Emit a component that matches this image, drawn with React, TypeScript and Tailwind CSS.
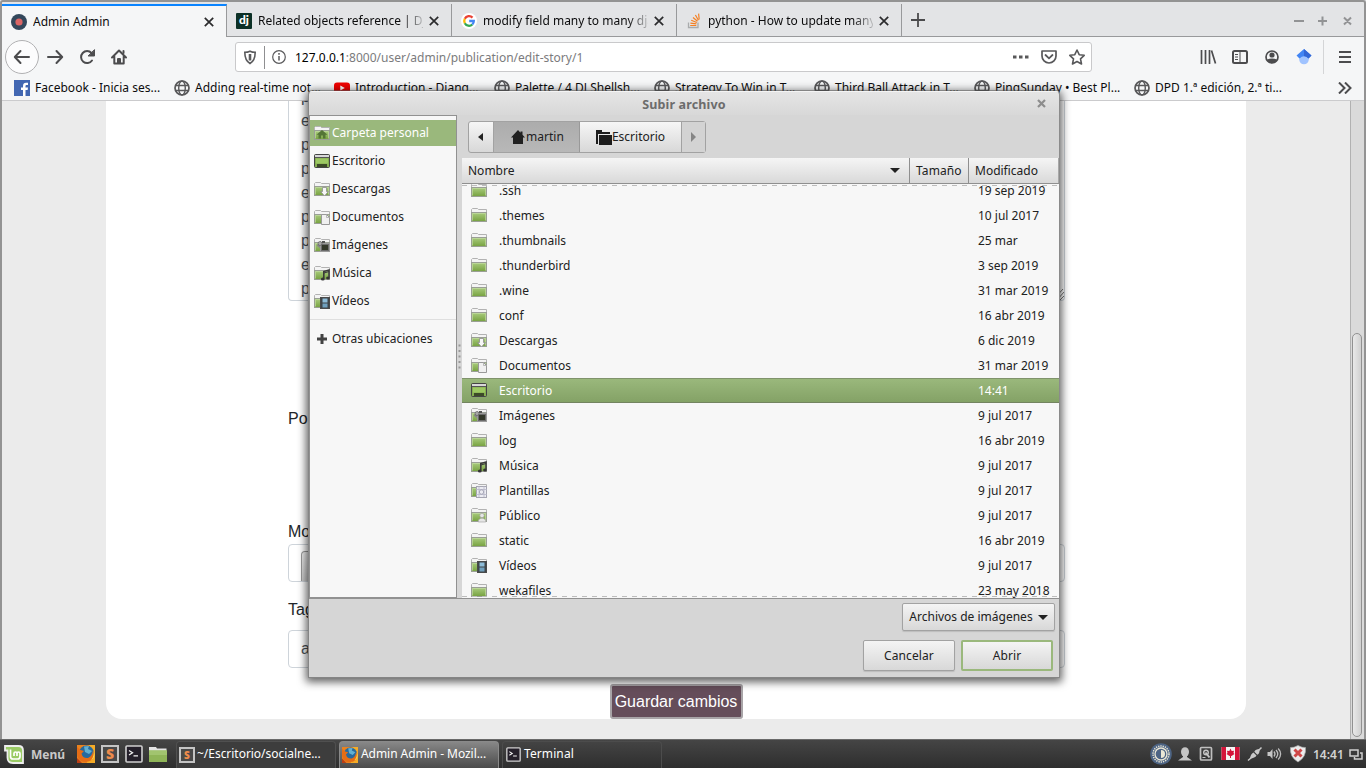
import React from 'react';

const NOTO = "font-['Noto_Sans',sans-serif]";

type FolderKind =
  | 'plain' | 'home' | 'desktop' | 'download' | 'docs' | 'images'
  | 'music' | 'video' | 'templates' | 'public';

function FolderIcon({ kind = 'plain' }: { kind?: FolderKind }) {
  if (kind === 'desktop') {
    return (
      <svg width="16" height="16" viewBox="0 0 16 16" className="-mt-px shrink-0">
        <rect x="0.5" y="1.5" width="15" height="13" rx="1" fill="#85ad50" stroke="#454545" />
        <rect x="1" y="2" width="14" height="2" fill="#d8d8d8" />
        <path d="M1 4.5H15" stroke="#555" />
        <rect x="2" y="5.5" width="12" height="5" fill="#9dc963" />
        <rect x="3" y="11" width="10" height="3" fill="#3c4a28" />
      </svg>
    );
  }
  return (
    <svg width="16" height="16" viewBox="0 0 16 16" className="-mt-px shrink-0">
      <defs>
        <linearGradient id="folderGreen" x1="0" y1="0" x2="0" y2="1">
          <stop offset="0" stopColor="#abcd80" />
          <stop offset="1" stopColor="#76a13f" />
        </linearGradient>
      </defs>
      <path d="M0.5 13.5V2.5L1.5 1.5H6.5L7.5 2.5H15.5V13.5Z" fill="#f4f4f4" stroke="#b2b2b2" />
      <rect x="0.5" y="5.5" width="15" height="9" fill="url(#folderGreen)" stroke="#9a9f95" />
      <path d="M1.5 13.5V6.5H14.5V13.5" stroke="#c3dca2" fill="none" strokeOpacity=".7" />
      {kind === 'home' && (
        <path d="M8 5L2.5 9.8H4.5V13.5H7V10.5H9V13.5H11.5V9.8H13.5Z" fill="#547536" />
      )}
      {kind === 'download' && (
        <path d="M8.5 6.5H12.5V10.5H14.3L10.5 15L6.700 10.500H8.500Z" fill="#f7f7f7" stroke="#8d8d8d" strokeWidth=".8" />
      )}
      {kind === 'docs' && (
        <>
          <path d="M7.5 5.5H12.5L15.5 8.5V15.5H7.5Z" fill="#f0f0f0" stroke="#999" />
          <path d="M12.5 5.5V8.5H15.5" fill="none" stroke="#aaa" strokeWidth=".8" />
        </>
      )}
      {kind === 'images' && (
        <>
          <path d="M2.5 8.5L7 4V12Z" fill="#888" />
          <rect x="6.5" y="6.5" width="9" height="8" fill="#6b6b6b" stroke="#9a9a9a" />
          <rect x="8" y="8" width="6" height="5" fill="#33382a" />
          <circle cx="6" cy="6.5" r="2" fill="#a8a8a8" stroke="#555" strokeWidth=".6" />
          <rect x="8" y="4" width="3" height="2" fill="#555" />
        </>
      )}
      {kind === 'music' && (
        <>
          <path d="M9.8 13.5V6.500L15 5V12.500" fill="none" stroke="#3a3a3a" strokeWidth="1.600" />
          <path d="M9.800 8L15 6.500" stroke="#3a3a3a" strokeWidth="1.300" />
          <ellipse cx="8.8" cy="14" rx="1.900" ry="1.600" fill="#333" />
          <ellipse cx="14" cy="13" rx="1.900" ry="1.600" fill="#333" />
        </>
      )}
      {kind === 'video' && (
        <>
          <rect x="6.5" y="4.5" width="9" height="11" fill="#3f4549" stroke="#4a4a4a" />
          <rect x="8.5" y="5.5" width="5" height="4" fill="#8dbcd8" />
          <rect x="8.5" y="10.5" width="5" height="4" fill="#6f9fbd" />
        </>
      )}
      {kind === 'templates' && (
        <>
          <rect x="5.5" y="4.5" width="10" height="11" fill="#ececf2" stroke="#a6a6b2" />
          <path d="M8 4V15M13 4V15M5 7.5H16M5 12.5H16" stroke="#b6b6c8" strokeWidth=".8" />
          <circle cx="10.5" cy="10" r="2.2" fill="none" stroke="#9c9cad" strokeWidth=".8" />
        </>
      )}
      {kind === 'public' && (
        <>
          <circle cx="11" cy="8.5" r="2.2" fill="#e6e6e6" stroke="#9c9c9c" strokeWidth=".6" />
          <path d="M7.3 15V13L9.8 11.200H12.200L14.800 13V15Z" fill="#e6e6e6" stroke="#9c9c9c" strokeWidth=".6" />
        </>
      )}
    </svg>
  );
}

function Globe() {
  return (
    <svg width="16" height="16" viewBox="0 0 16 16" className="shrink-0" fill="none" stroke="#58585a" strokeWidth="1.4">
      <circle cx="8" cy="8" r="7" strokeWidth="1.7" />
      <ellipse cx="8" cy="8" rx="3.3" ry="7" />
      <path d="M1.5 5.5H14.5M1.5 10.5H14.5" />
    </svg>
  );
}

function CloseX() {
  return (
    <svg width="10" height="10" viewBox="0 0 10 10" className="shrink-0">
      <path d="M0.8 0.8L9.2 9.2M9.2 0.8L0.8 9.2" stroke="#2b2b2d" strokeWidth="1.7" />
    </svg>
  );
}

function Favicon({ kind }: { kind: string }) {
  if (kind === 'admin')
    return (
      <svg width="16" height="16" viewBox="0 0 16 16">
        <circle cx="8" cy="8" r="8" fill="#33475b" />
        <circle cx="8" cy="8" r="3.6" fill="#da6565" />
      </svg>
    );
  if (kind === 'dj')
    return (
      <span className="flex h-4 w-4 items-center justify-center rounded-[1px] bg-[#0c3026] pb-[2px] font-['Lato',sans-serif] text-[12px] leading-none font-black text-white">dj</span>
    );
  if (kind === 'google')
    return (
      <svg width="16" height="16" viewBox="0 0 16 16" fill="none" strokeWidth="2.3">
        <circle cx="8" cy="8" r="8" fill="#fff" />
        <path d="M11.5 4.6A4.8 4.8 0 0 0 3.8 5.8" stroke="#ea4335" />
        <path d="M3.8 5.8A4.8 4.8 0 0 0 3.8 10.2" stroke="#fbbc05" />
        <path d="M3.8 10.2A4.8 4.8 0 0 0 11.3 11.5" stroke="#34a853" />
        <path d="M11.3 11.5A4.8 4.8 0 0 0 12.8 8H8.2" stroke="#4285f4" />
      </svg>
    );
  return (
    <svg width="16" height="16" viewBox="0 0 16 16" fill="none">
      <path d="M2.5 9.5V14.5H12V9.5" stroke="#a9abad" strokeWidth="1.3" />
      <path d="M4.2 12.5H10.3M4.4 10.1L10.4 10.9M5.2 7.3L10.8 9.5M7 4.5L11.5 8.2M9.4 2L12.4 7.3M12.6 0.6L13.2 6.5" stroke="#f48024" strokeWidth="1.2" />
    </svg>
  );
}

const tabs = [
  { kind: 'admin', title: 'Admin Admin' },
  { kind: 'dj', title: 'Related objects reference | Django' },
  { kind: 'google', title: 'modify field many to many django' },
  { kind: 'so', title: 'python - How to update many to' },
];

function TabBar() {
  return (
    <div className="flex h-[37px] border-b border-[#98999b] bg-[#e3e4e6] pl-[2px]">
      {tabs.map((t, i) => (
        <div
          key={t.kind}
          className={
            i === 0
              ? 'mt-1 flex h-[33px] w-[225px] shrink-0 items-center border-t-2 border-r border-t-[#0a84ff] border-r-[#98999b] bg-[#f5f6f7] pr-3 pl-[9px]'
              : 'mt-1 flex h-8 w-[225px] shrink-0 items-center border-r border-[#98999b] pt-[2px] pr-3 pl-[9px]'
          }
        >
          <Favicon kind={t.kind} />
          <div className={`ml-[6px] w-[165px] overflow-hidden text-[12px] whitespace-nowrap text-[#0c0c0d] ${i ? '[mask-image:linear-gradient(to_right,black_145px,transparent_169px)]' : ''}`}>
            {t.title}
          </div>
          <div className="ml-auto"><CloseX /></div>
        </div>
      ))}
      <svg width="14" height="14" viewBox="0 0 14 14" className="mt-[13px] ml-[9px]">
        <path d="M7 0V14M0 7H14" stroke="#4a4a4c" strokeWidth="1.8" />
      </svg>
      <svg width="64" height="12" viewBox="0 0 64 12" className="mt-[15px] mr-[10px] ml-auto" stroke="#929395" strokeWidth="2">
        <path d="M2 6H12M26 6H35M30.5 1.5V10.5M52 2.5L59 9.5M59 2.5L52 9.5" />
      </svg>
    </div>
  );
}

function NavBar() {
  return (
    <div className="flex h-10 items-center bg-[#f5f6f7] pl-1">
      <svg width="130" height="36" viewBox="4 39 130 36" fill="none" stroke="#4c4c4e" strokeWidth="2" strokeLinejoin="round" strokeLinecap="round">
        <circle cx="22" cy="57" r="16.5" fill="#fcfcfd" stroke="#b1b1b3" strokeWidth="1" />
        <path d="M15 57H29M20.5 51L14.8 57L20.5 63" />
        <path d="M48 57H62M56.5 51L62.2 57L56.5 63" />
        <path d="M92 60.5A6 6 0 1 1 91.5 53" />
        <path d="M94.5 50V56H88.5Z" fill="#4c4c4e" strokeWidth="1" />
        <path d="M112 57.5L119 50.5L126 57.5M114.3 56.5V63.5H123.7V56.5" />
        <path d="M118 63V59H120V63M123.5 51V53" />
      </svg>
      <div className="ml-[101px] flex h-[30px] w-[857px] items-center rounded-[3px] border border-[#c9c9cb] bg-white">
        <svg width="50" height="26" viewBox="239 44 50 26" className="ml-[3px]" fill="none" stroke="#5a5a5c">
          <path d="M250 51.2C248.500 51.900 246.500 52.300 244.800 52.300C244.800 57 245.500 61 250 63.500C254.500 61 255.200 57 255.200 52.300C253.500 52.300 251.500 51.900 250 51.2Z" strokeWidth="1.6" />
          <path d="M250 54V60.500" strokeWidth="2.600" />
          <path d="M264.500 46V69" stroke="#8f8f91" strokeWidth="1" />
          <circle cx="279" cy="57" r="6.300" strokeWidth="1.200" />
          <path d="M279 56V60.500M279 53V54.700" strokeWidth="1.500" />
        </svg>
        <div className="ml-[6px] pt-px text-[12px] whitespace-nowrap text-[#7b7b7d]">
          <span className="text-black">127.0.0.1</span>:8000/user/admin/publication/edit-story/1
        </div>
        <svg width="74" height="18" viewBox="1012 48 74 18" className="mr-[5px] ml-auto" fill="none" stroke="#58585a">
          <path d="M1013 57H1016.500M1019 57H1022.500M1025 57H1028.500" strokeWidth="3.200" />
          <path d="M1042 51H1056V56A7 7 0 0 1 1042 56Z" strokeWidth="1.700" strokeLinejoin="round" />
          <path d="M1045.500 55L1049 58.300L1052.500 55" strokeWidth="1.800" strokeLinecap="round" />
          <path d="M1077 50L1079.200 54.700L1084.200 55.300L1080.500 58.800L1081.500 64L1077 61.500L1072.500 64L1073.500 58.800L1069.800 55.300L1074.800 54.700Z" strokeWidth="1.600" strokeLinejoin="round" />
        </svg>
      </div>
      <svg width="160" height="34" viewBox="1196 40 160 34" className="ml-[104px]" fill="none" stroke="#4c4c4e">
        <path d="M1201.500 50V64M1205.500 50V64M1209.500 50V64M1211.500 50.500L1215.500 63.500" strokeWidth="1.700" />
        <rect x="1233" y="51" width="14" height="12" rx="1.500" strokeWidth="2" />
        <path d="M1240 51V63M1235 54.500H1238M1235 57H1238M1235 59.500H1238" strokeWidth="1" />
        <circle cx="1272" cy="57" r="6" strokeWidth="1.700" />
        <circle cx="1272" cy="55" r="2.600" fill="#4c4c4e" stroke="none" />
        <path d="M1267 59.500Q1272 57.500 1277 59.500L1275 63H1269Z" fill="#4c4c4e" stroke="none" />
        <circle cx="1304" cy="59.500" r="4.800" fill="#a0c3ff" stroke="none" />
        <path d="M1304 49L1296.500 55.500L1299.500 58.500Q1304 54 1308.500 58.500L1311.500 55.500Z" fill="#4285f4" stroke="none" />
        <path d="M1304 49L1311.500 55.500L1308.500 58.500Q1306.500 56 1304 56Z" fill="#3367d6" stroke="none" />
        <path d="M1323.500 40V74" stroke="#d4d5d7" strokeWidth="1" />
        <path d="M1339 52H1351M1339 57H1351M1339 62H1351" strokeWidth="1.900" />
      </svg>
    </div>
  );
}

const bookmarks = [
  'Facebook - Inicia ses...', 'Adding real-time not...', 'Introduction - Djang...', 'Palette / 4 DJ Shellsh...',
  'Strategy To Win in T...', 'Third Ball Attack in T...', 'PingSunday • Best Pl...', 'DPD 1.ª edición, 2.ª ti...',
];

function Bookmarks() {
  return (
    <div className="flex h-6 items-center border-b border-[#cbcbcd] bg-[#f5f6f7] pb-[2px] pl-[14px]">
      {bookmarks.map((b, i) => (
        <div key={b} className="flex w-40 shrink-0 items-center gap-[5px] text-[12px] whitespace-nowrap text-[#0c0c0d]">
          {i === 0 ? (
            <svg width="16" height="16" viewBox="0 0 16 16">
              <rect width="16" height="16" fill="#4267b2" />
              <path d="M9 16V10H7V7.500H9V6C9 3.800 10.200 2.800 12 2.800H14V5H12.800C11.800 5 11.500 5.500 11.500 6.200V7.500H14L13.600 10H11.500V16Z" fill="#fff" />
            </svg>
          ) : i === 2 ? (
            <svg width="16" height="16" viewBox="0 0 16 16">
              <rect y="2.500" width="16" height="11" rx="3" fill="#f00000" />
              <path d="M6.300 5.500L10.800 8L6.300 10.500Z" fill="#fff" />
            </svg>
          ) : (
            <Globe />
          )}
          {b}
        </div>
      ))}
      <svg width="14" height="12" viewBox="0 0 14 12" className="ml-auto mr-[14px]" fill="none" stroke="#4c4c4e" strokeWidth="2">
        <path d="M1 0.500L6.500 6L1 11.500M7 0.500L12.500 6L7 11.500" />
      </svg>
    </div>
  );
}

function PageContent() {
  return (
    <div className="flex h-[638px] border-l-2 border-[#a3a3a3] bg-[#ebebeb]">
      <div className="ml-[104px] flex h-[618px] w-[1140px] flex-col items-start rounded-b-2xl bg-white pl-[182px] font-['Liberation_Sans',sans-serif] text-base leading-6 text-[#212529]">
        <div className="relative h-[202px] w-[777px] overflow-hidden rounded-b border border-t-0 border-[#ced4da] pl-3 text-[#495057]">
          <div className="-mt-4">
            {['p', 'e', 'p', 'p', 'e', 'p', 'p', 'e', 'p'].map((c, i) => (
              <div key={i}>{c}</div>
            ))}
          </div>
          <svg width="10" height="12" viewBox="0 0 10 12" className="absolute right-0 bottom-0">
            <path d="M0 11L9 1M3 12L10 4M6 12L10 8" stroke="#777" />
          </svg>
        </div>
        <div className="mt-[106px]">Po</div>
        <div className="mt-[89px]">Mo</div>
        <div className="h-[38px] w-[777px] rounded border border-[#ced4da] pt-[6px] pl-3">
          <div className="h-[30px] w-24 rounded-tl border border-b-0 border-[#999] bg-gradient-to-b from-[#f0f0f0] to-[#ccc]" />
        </div>
        <div className="mt-4">Tag</div>
        <div className="mt-2 h-[38px] w-[777px] rounded border border-[#ced4da] py-[6px] pl-3 text-[#495057]">a</div>
        <div className="mt-[16px] ml-[322px] flex h-[35px] w-[133px] items-center justify-center rounded-[3px] border-2 border-[#a8a4a7] bg-[#654d5a] pr-px text-white">
          Guardar cambios
        </div>
      </div>
      <div className="mr-[2px] ml-auto flex w-[14px] items-end border-l border-[#b1b1b1] bg-[#dadada]">
        <div className="mb-[2px] ml-[1px] h-[404px] w-[10px] rounded-full border border-[#919191] bg-gradient-to-r from-[#e9e9e9] to-[#d0d0d0]" />
      </div>
    </div>
  );
}

const places: [string, FolderKind][] = [
  ['Carpeta personal', 'home'], ['Escritorio', 'desktop'], ['Descargas', 'download'], ['Documentos', 'docs'],
  ['Imágenes', 'images'], ['Música', 'music'], ['Vídeos', 'video'],
];

const files: [string, string, FolderKind][] = [
  ['.ssh', '19 sep 2019', 'plain'], ['.themes', '10 jul 2017', 'plain'], ['.thumbnails', '25 mar', 'plain'],
  ['.thunderbird', '3 sep 2019', 'plain'], ['.wine', '31 mar 2019', 'plain'], ['conf', '16 abr 2019', 'plain'],
  ['Descargas', '6 dic 2019', 'download'], ['Documentos', '31 mar 2019', 'docs'], ['Escritorio', '14:41', 'desktop'],
  ['Imágenes', '9 jul 2017', 'images'], ['log', '16 abr 2019', 'plain'], ['Música', '9 jul 2017', 'music'],
  ['Plantillas', '9 jul 2017', 'templates'], ['Público', '9 jul 2017', 'public'], ['static', '16 abr 2019', 'plain'],
  ['Vídeos', '9 jul 2017', 'video'], ['wekafiles', '23 may 2018', 'plain'],
];

const GTK_BTN = 'flex items-center justify-center rounded-[2px] border border-[#a2a2a2] bg-gradient-to-b from-[#f4f4f4] to-[#d8d8d8] shadow-[0_1px_1px_rgba(0,0,0,0.12)]';

function FileDialog() {
  return (
    <div className="absolute top-[91px] left-[308px] flex h-[587px] w-[752px] flex-col rounded-t border border-t-[#f4f4f4] border-r-[#8b8b8b] border-b-[#858585] border-l-[#858585] bg-[#d6d6d6] text-[12px] text-[#212121] shadow-[0_-1px_0_0_rgba(90,90,90,0.5),0_2px_9px_2px_rgba(0,0,0,0.62)]">
      <div className="relative flex h-[23px] shrink-0 items-center justify-center rounded-t bg-gradient-to-b from-[#e5e5e5] to-[#d8d8d8] pt-[3px] text-[12.500px] font-bold text-[#6c6c6c]">
        <span className="tracking-[0.15px]">Subir archivo</span>
        <svg width="9" height="9" viewBox="0 0 9 9" className="absolute top-[7px] right-[13px]">
          <path d="M1 1L8 8M8 1L1 8" stroke="#8d8d8d" strokeWidth="2.200" />
        </svg>
      </div>
      <div className="flex h-[484px] shrink-0 border-b border-[#919191]">
        <div className="flex w-[148px] shrink-0 flex-col border border-[#919191] bg-[#f7f7f7] pt-1">
          {places.map(([name, kind], i) => (
            <div
              key={name}
              className={
                i === 0
                  ? 'mb-[2px] flex h-[26px] items-center gap-[2px] bg-[#9ab87c] pl-1 text-white'
                  : 'mb-[2px] flex h-[26px] items-center gap-[2px] pl-1'
              }
            >
              <FolderIcon kind={kind} />
              {name}
            </div>
          ))}
          <div className="mt-[3px] h-px bg-[#dfdfdf]" />
          <div className="mt-[6px] flex h-[26px] items-center gap-[5px] pl-[7px]">
            <svg width="10" height="10" viewBox="0 0 10 10">
              <path d="M3.500 0H6.500V3.500H10V6.500H6.500V10H3.500V6.500H0V3.500H3.500Z" fill="#424242" />
            </svg>
            Otras ubicaciones
          </div>
        </div>
        <div className="flex w-[5px] shrink-0 items-center justify-center">
          <svg width="3" height="25" viewBox="0 0 3 25">
            <path d="M1.500 0.500V25" stroke="#999" strokeWidth="2" strokeDasharray="2 3.500" />
          </svg>
        </div>
        <div className="flex min-w-0 flex-1 flex-col">
          <div className="flex h-[43px] shrink-0 items-start pt-[6px] pl-[6px]">
            <div className="flex h-8 rounded-[3px] border border-[#a2a2a2] bg-gradient-to-b from-[#f6f6f6] to-[#d8d8d8]">
              <div className="flex w-[25px] items-center justify-center border-r border-[#a2a2a2] pr-[2px]">
                <svg width="5" height="8" viewBox="0 0 5 8"><path d="M5 0V8L0 4Z" fill="#222" /></svg>
              </div>
              <div className="flex w-[86px] items-center justify-center border-r border-[#999] bg-gradient-to-b from-[#acacac] to-[#b8b8b8]">
                <svg width="14" height="14" viewBox="0 0 14 14" className="ml-[2px]"><path d="M7 0L0 7.500H2V14H12V7.500H14L11.500 4.800V1.500H9.500V2.700Z" fill="#212121" /></svg>
                <span className="ml-px">martin</span>
              </div>
              <div className="flex w-[102px] items-center justify-center border-r border-[#a2a2a2]">
                <svg width="16" height="15" viewBox="0 0 16 15"><path d="M0 0H6V2H14V4H2V14H0ZM3 5H16V15H3Z" fill="#1d1d1d" /></svg>
                Escritorio
              </div>
              <div className="flex w-[23px] items-center justify-center bg-[#d3d3d3]">
                <svg width="5" height="10" viewBox="0 0 5 10"><path d="M0 0V10L5 5Z" fill="#858585" /></svg>
              </div>
            </div>
          </div>
          <div className="flex h-[26px] shrink-0 items-center border-b border-[#8f8f8f] bg-gradient-to-b from-[#f5f5f5] to-[#d9d9d9]">
            <div className="flex h-full w-[448px] items-center justify-between border-r border-[#8f8f8f] pr-[9px] pl-[6px]">
              Nombre
              <svg width="10" height="5" viewBox="0 0 10 5"><path d="M0 0H10L5 5Z" fill="#212121" /></svg>
            </div>
            <div className="flex h-full w-[59px] items-center border-r border-[#8f8f8f] pl-[6px] tracking-[0.1px]">Tamaño</div>
            <div className="flex h-full w-[90px] items-center border-r border-[#a8a8a8] pl-[6px]">Modificado</div>
          </div>
          <div className="relative flex min-h-0 flex-1 flex-col justify-end overflow-hidden bg-[#f7f7f7]">
            <div className="-mb-[5px]">
              {files.map(([name, date, kind]) => (
                <div
                  key={name}
                  className={
                    name === 'Escritorio'
                      ? 'flex h-[25px] items-center border-y border-t-[#80936c] border-b-[#738460] bg-gradient-to-b from-[#9ab87c] to-[#84a266] pl-[9px] text-white'
                      : 'flex h-[25px] items-center pl-[9px]'
                  }
                >
                  <FolderIcon kind={kind} />
                  <span className="ml-3 w-[479px]">{name}</span>
                  <span className="whitespace-nowrap">{date}</span>
                </div>
              ))}
            </div>
            <div className="absolute inset-x-0 top-px h-px bg-[repeating-linear-gradient(to_right,#bdbdbd_0_5px,transparent_5px_10px)]" />
            <div className="absolute inset-x-0 bottom-px h-px bg-[repeating-linear-gradient(to_right,#bdbdbd_0_5px,transparent_5px_10px)]" />
          </div>
        </div>
      </div>
      <div className="flex flex-col items-end">
        <div className={`mt-1 mr-1 h-7 w-[153px] gap-[5px] ${GTK_BTN}`}>
          Archivos de imágenes
          <svg width="10" height="5" viewBox="0 0 10 5"><path d="M0 0H10L5 5Z" fill="#212121" /></svg>
        </div>
        <div className="mt-[9px] mr-[6px] flex gap-[6px] tracking-[0.1px]">
          <div className={`h-[31px] w-[92px] ${GTK_BTN}`}>Cancelar</div>
          <div className="flex h-[31px] w-[92px] items-center justify-center rounded-[2px] border-2 border-[#9ab87c] bg-gradient-to-b from-[#f4f4f4] to-[#d8d8d8]">Abrir</div>
        </div>
      </div>
    </div>
  );
}

function FirefoxLogo({ size }: { size: number }) {
  return (
    <svg width={size} height={size} viewBox="0 0 18 18">
      <rect width="18" height="18" fill="#e9821e" />
      <path d="M12 0H18V18H10Z" fill="#f6ac27" />
      <circle cx="9.500" cy="8" r="7.500" fill="#276a9e" />
      <path d="M7 1.500L12 1L11 4L15 6L12 9L8 7Z" fill="#62b0d2" />
      <path d="M0 2L3.500 5L7 6L4.500 8.500Q5.500 13.500 11 13Q15.500 11 16 5Q18 10 15.500 14.500Q11 18 5 16.500Q0 14 0 8Z" fill="#e66d16" />
      <path d="M16 5Q18 10 14 15Q17.500 14 17.500 9Z" fill="#fcd34a" />
      <path d="M0 13L5 18H0Z" fill="#bb3f16" />
    </svg>
  );
}

function SublimeLogo({ small = false }: { small?: boolean }) {
  return (
    <span className={`flex shrink-0 items-center justify-center border-2 border-[#c4c4c4] bg-[#494949] font-['Open_Sans',sans-serif] leading-none font-extrabold text-[#ee8b4b] ${small ? 'h-4 w-4 text-[10px]' : 'h-[18px] w-[18px] text-[14px]'}`}>
      S
    </span>
  );
}

function TerminalLogo({ size }: { size: number }) {
  return (
    <svg width={size} height={size} viewBox="0 0 18 18" fill="none">
      <rect x="1" y="1" width="16" height="16" rx="1" fill="#241f2a" stroke="#d0d0d0" strokeWidth="1.600" />
      <path d="M4 5.500L7.500 7.800L4 10M8.500 10.800H13" stroke="#f2f2f2" strokeWidth="1.300" />
    </svg>
  );
}

function Tray() {
  return (
    <svg width="164" height="24" viewBox="1146.5 743 164 24" fill="none" className="shrink-0">
      <circle cx="1158.500" cy="755" r="10.800" fill="#4d6484" />
      <circle cx="1158.500" cy="755" r="8" stroke="#ece8d6" strokeWidth="1.500" strokeDasharray="1.300 1" />
      <circle cx="1158.500" cy="755" r="6" stroke="#ece8d6" strokeWidth="1.300" />
      <path d="M1158.500 751A4 4 0 0 1 1158.500 759Z" fill="#ece8d6" />
      <ellipse cx="1182.500" cy="753" rx="4" ry="4.800" fill="#c5c5c5" />
      <path d="M1175.500 761.500L1180.500 758V755H1184.500V758L1189.500 761.500Z" fill="#c5c5c5" />
      <rect x="1198" y="748.500" width="11" height="12.500" rx="1" stroke="#bfbfbf" strokeWidth="1.700" />
      <circle cx="1203.500" cy="753.500" r="2.300" stroke="#c5c5c5" strokeWidth="1.400" />
      <path d="M1203 753.500L1207 758.500" stroke="#c5c5c5" strokeWidth="2" />
      <path d="M1200 758.500H1203" stroke="#c5c5c5" />
      <rect x="1219" y="748" width="18" height="13" fill="#f4f4f4" />
      <path d="M1219 748H1223.500V761H1219ZM1232.500 748H1237V761H1232.500Z" fill="#d4143a" />
      <path d="M1228 749.500L1229.200 752L1231.500 751.800L1231 754L1232 755L1229 757H1228.500V759H1227.500V757H1227L1224 755L1225 754L1224.500 751.800L1226.800 752Z" fill="#d4143a" />
      <g transform="translate(1 0)">
        <path d="M1244.500 761.500L1248 758.500M1255 751.500L1258 748.500" stroke="#c9c9c9" strokeWidth="1.500" />
        <path d="M1246.500 759.500Q1247 755 1250 753.500L1253 756.500Q1251.500 759 1246.500 759.500ZM1250.800 752.700Q1252 750 1256 750Q1256.500 754.500 1253.800 755.700Z" fill="#c9c9c9" />
        <path d="M1264 753H1266.500L1269 750V760L1266.500 757H1264Z" fill="#c5c5c5" />
        <path d="M1270.500 752.500Q1272.500 755 1270.500 757.500M1272.500 751Q1276 755 1272.500 759M1274.700 749.500Q1279.500 755 1274.700 760.500" stroke="#bdbdbd" strokeWidth="1.300" />
        <path d="M1294.500 746.500Q1299 749 1302 748.500Q1303 758 1294.500 763Q1286 758 1287 748.500Q1290 749 1294.500 746.500Z" fill="#ececec" stroke="#aaa" strokeWidth=".7" />
        <path d="M1291 750.500L1298 757.500M1298 750.500L1291 757.500" stroke="#d04848" strokeWidth="3" />
      </g>
    </svg>
  );
}

function Taskbar() {
  return (
    <div className="flex h-[29px] items-center border-t border-[#696969] bg-gradient-to-b from-[#454545] to-[#2e2e2e] pl-1 text-[12px] text-white">
      <svg width="20" height="19" viewBox="0 0 20 19">
        <path d="M1 1H14.5Q19 1 19 5.5V18H9Q3.500 18 3.500 12.500V5.500H1Z" fill="#9acb65" stroke="#eee" strokeWidth="1.800" />
        <path d="M6.500 4.500V11.500Q6.500 14 9 14H13.500Q16 14 16 11.500V8.500Q16 7 14.500 7Q13 7 13 8.500V11M13 8.500Q13 7 11.500 7Q10 7 10 8.500V11" fill="none" stroke="#fff" strokeWidth="1.700" />
      </svg>
      <span className="ml-[7px] w-[46px] pt-px text-[12px] font-bold text-[#c9c9c9]">Menú</span>
      <div className="flex items-center gap-[6px]">
        <FirefoxLogo size={18} />
        <SublimeLogo />
        <TerminalLogo size={18} />
        <svg width="18" height="18" viewBox="0 0 18 18">
          <path d="M0 2H7L8 3.500H17.500V15H0Z" fill="#e5e5e5" />
          <path d="M0 5.500H18V17H0Z" fill="#8fb558" />
          <path d="M0 5.500H18V10H0Z" fill="#a1c46f" />
        </svg>
      </div>
      <div className="ml-[9px] flex h-[27px] items-center gap-[3px]">
        <div className="flex h-full w-40 items-center gap-[2px] rounded-t border border-b-0 border-[#505050] bg-[#3d3d3d] pl-[2px] whitespace-nowrap">
          <SublimeLogo small /><span className="pb-px tracking-[-0.03px]">~/Escritorio/socialne...</span>
        </div>
        <div className="flex h-full w-40 items-center gap-[3px] rounded-t border border-b-0 border-[#8a8a8a] bg-gradient-to-b from-[#888] to-[#4b4b4b] pl-[2px] whitespace-nowrap">
          <FirefoxLogo size={16} /><span className="pb-px tracking-[-0.05px]">Admin Admin - Mozil...</span>
        </div>
        <div className="flex h-full w-40 items-center gap-[3px] rounded-t border border-b-0 border-[#4c4c4c] pl-[3px] whitespace-nowrap">
          <TerminalLogo size={15} /><span className="pb-px tracking-[0.1px]">Terminal</span>
        </div>
      </div>
      <div className="ml-auto flex items-center pr-[3px]">
        <Tray />
        <span className="w-9 pt-px text-[12px] font-semibold text-[#d2d2d2]">14:41</span>
        <svg width="14" height="11" viewBox="0 0 14 11" fill="none" stroke="#d0d0d0" strokeWidth="1.500">
          <path d="M1 1H9V7H1ZM11 4H13V10H5.500V8" />
        </svg>
      </div>
    </div>
  );
}

export default function App() {
  return (
    <div className={`relative h-[768px] w-[1366px] overflow-hidden bg-[#2f2f2f] ${NOTO}`}>
      <div className="h-[739px]">
        <TabBar />
        <NavBar />
        <Bookmarks />
        <PageContent />
      </div>
      <Taskbar />
      <FileDialog />
      <div className="pointer-events-none absolute inset-x-0 top-0 h-[739px] rounded-t-[3px] border-2 border-b-0 border-[#939393]" />
    </div>
  );
}
